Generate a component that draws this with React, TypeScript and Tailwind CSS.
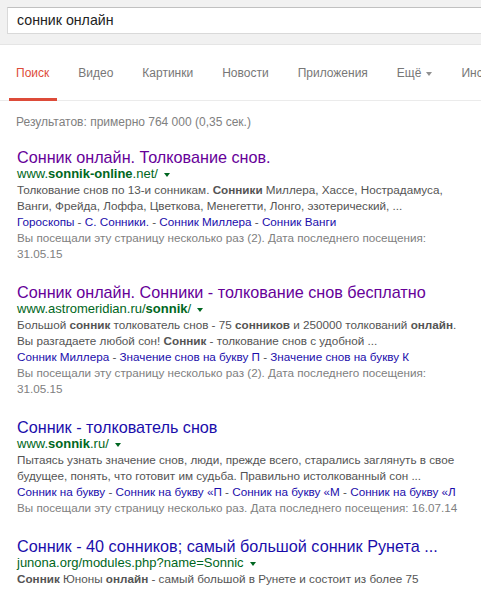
import React from 'react';

type Part = string | { b: string };

const Line = ({ parts, className }: { parts: Part[]; className: string }) => (
  <div className={`whitespace-nowrap ${className}`}>
    {parts.map((p, i) =>
      typeof p === 'string' ? <span key={i}>{p}</span> : <b key={i} className="font-bold">{p.b}</b>
    )}
  </div>
);

const Sitelinks = ({ links }: { links: string[] }) => (
  <div className="whitespace-nowrap text-[11.7px] leading-[16px] text-[#1a0dab]">
    {links.map((l, i) => (
      <span key={i}>
        {i > 0 && <span className="text-[#545454]"> - </span>}
        {l}
      </span>
    ))}
  </div>
);

const results = [
  {
    title: 'Сонник онлайн. Толкование снов.',
    visited: true,
    url: ['www.', { b: 'sonnik-online' }, '.net/'] as Part[],
    snippet: [
      ['Толкование снов по 13-и сонникам. ', { b: 'Сонники' }, ' Миллера, Хассе, Нострадамуса,'],
      ['Ванги, Фрейда, Лоффа, Цветкова, Менегетти, Лонго, эзотерический, ...'],
    ] as Part[][],
    links: ['Гороскопы', 'С. Сонники.', 'Сонник Миллера', 'Сонник Ванги'],
    seen: ['Вы посещали эту страницу несколько раз (2). Дата последнего посещения:', '31.05.15'],
  },
  {
    title: 'Сонник онлайн. Сонники - толкование снов бесплатно',
    visited: true,
    url: ['www.astromeridian.ru/', { b: 'sonnik' }, '/'] as Part[],
    snippet: [
      ['Большой ', { b: 'сонник' }, ' толкователь снов - 75 ', { b: 'сонников' }, ' и 250000 толкований ', { b: 'онлайн' }, '.'],
      ['Вы разгадаете любой сон! ', { b: 'Сонник' }, ' - толкование снов с удобной ...'],
    ] as Part[][],
    links: ['Сонник Миллера', 'Значение снов на букву П', 'Значение снов на букву К'],
    seen: ['Вы посещали эту страницу несколько раз (2). Дата последнего посещения:', '31.05.15'],
  },
  {
    title: 'Сонник - толкователь снов',
    visited: false,
    url: ['www.', { b: 'sonnik' }, '.ru/'] as Part[],
    snippet: [
      ['Пытаясь узнать значение снов, люди, прежде всего, старались заглянуть в свое'],
      ['будущее, понять, что готовит им судьба. Правильно истолкованный сон ...'],
    ] as Part[][],
    links: ['Сонник на букву', 'Сонник на букву «П', 'Сонник на букву «М', 'Сонник на букву «Л'],
    seen: ['Вы посещали эту страницу несколько раз. Дата последнего посещения: 16.07.14'],
  },
  {
    title: 'Сонник - 40 сонников; самый большой сонник Рунета ...',
    visited: false,
    url: ['junona.org/modules.php?name=Sonnic'] as Part[],
    snippet: [
      [{ b: 'Сонник' }, ' Юноны ', { b: 'онлайн' }, ' - самый большой в Рунете и состоит из более 75'],
    ] as Part[][],
    links: [],
    seen: [],
  },
];

const tabs = ['Поиск', 'Видео', 'Картинки', 'Новости', 'Приложения', 'Ещё', 'Инструменты поиска'];

export default function App() {
  return (
    <div className="w-[481px] h-[590px] overflow-hidden bg-white font-['Liberation_Sans',Arial,sans-serif]">
      <div className="h-[45px] bg-[#f1f1f1] border-b border-[#e5e5e5] pt-[7px] pl-[7px]">
        <div className="h-[27px] bg-white border border-[#d9d9d9] border-t-[#c0c0c0] border-r-0 pl-[9px] text-[14.2px] leading-[25px] text-[#222]">
          сонник онлайн
        </div>
      </div>

      <div className="h-[56px] border-b border-[#ebebeb] flex pl-[16px] gap-[29px] whitespace-nowrap">
        {tabs.map((t, i) => (
          <div
            key={t}
            className={`relative h-full flex items-center text-[12px] ${i === 0 ? 'text-[#dd4b39]' : 'text-[#777]'}`}
          >
            {t}
            {t === 'Ещё' && (
              <span className="ml-[5px] mt-[2px] border-x-[3px] border-x-transparent border-t-[4px] border-t-[#909090]" />
            )}
            {i === 0 && <span className="absolute -left-[7px] -right-[8px] -bottom-px h-[3px] bg-[#dd4b39]" />}
          </div>
        ))}
      </div>

      <div className="pl-[17px]">
        <div className="mt-[13px] -ml-px text-[12px] leading-[16px] text-[#808080]">
          Результатов: примерно 764 000 (0,35 сек.)
        </div>

        <div className="mt-[19px] flex flex-col gap-[22px]">
          {results.map((r) => (
            <div key={r.title}>
              <div
                className={`whitespace-nowrap text-[16.2px] leading-[17px] ${r.visited ? 'text-[#660099]' : 'text-[#1a0dab]'}`}
              >
                {r.title}
              </div>
              <div className="flex items-center text-[13px] leading-[16px] text-[#006621]">
                <Line parts={r.url} className="" />
                <span className="ml-[6px] mt-[1px] border-x-[3px] border-x-transparent border-t-[4px] border-t-[#006621]" />
              </div>
              {r.snippet.map((s, i) => (
                <Line key={i} parts={s} className="text-[11.7px] leading-[16px] text-[#545454]" />
              ))}
              {r.links.length > 0 && <Sitelinks links={r.links} />}
              {r.seen.map((s, i) => (
                <div key={i} className="whitespace-nowrap text-[11.7px] leading-[16px] text-[#808080]">
                  {s}
                </div>
              ))}
            </div>
          ))}
        </div>
      </div>
    </div>
  );
}
